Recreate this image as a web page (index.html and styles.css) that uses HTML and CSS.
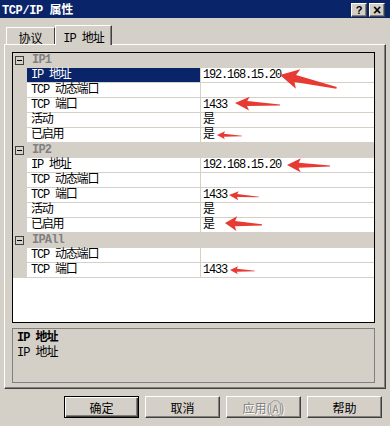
FILE: index.html
```html
<!DOCTYPE html>
<html lang="zh-CN">
<head>
  <meta charset="UTF-8">
  <title>TCP/IP 属性</title>
  <link rel="stylesheet" href="styles.css">
</head>
<body>
  <div class="window">
    <div class="titlebar">
      <span class="title">TCP/IP 属性</span>
      <div class="caption-btns">
        <span class="cap-btn">?</span>
        <span class="cap-btn close">×</span>
      </div>
    </div>

    <div class="tabs">
      <div class="tab">协议</div>
      <div class="tab active">IP 地址</div>
    </div>

    <div class="panel">
      <div class="grid">
        <div class="group"><span class="toggle"></span>IP1</div>
        <div class="row selected"><span class="name">IP 地址</span><span class="val">192.168.15.20</span></div>
        <div class="row"><span class="name">TCP 动态端口</span><span class="val"></span></div>
        <div class="row"><span class="name">TCP 端口</span><span class="val">1433</span></div>
        <div class="row"><span class="name">活动</span><span class="val">是</span></div>
        <div class="row"><span class="name">已启用</span><span class="val">是</span></div>

        <div class="group"><span class="toggle"></span>IP2</div>
        <div class="row"><span class="name">IP 地址</span><span class="val">192.168.15.20</span></div>
        <div class="row"><span class="name">TCP 动态端口</span><span class="val"></span></div>
        <div class="row"><span class="name">TCP 端口</span><span class="val">1433</span></div>
        <div class="row"><span class="name">活动</span><span class="val">是</span></div>
        <div class="row"><span class="name">已启用</span><span class="val">是</span></div>

        <div class="group"><span class="toggle"></span>IPAll</div>
        <div class="row"><span class="name">TCP 动态端口</span><span class="val"></span></div>
        <div class="row"><span class="name">TCP 端口</span><span class="val">1433</span></div>
      </div>

      <div class="desc">
        <div class="desc-title">IP 地址</div>
        <div>IP 地址</div>
      </div>
    </div>

    <div class="buttons">
      <button class="btn default">确定</button>
      <button class="btn">取消</button>
      <button class="btn disabled">应用(<u>A</u>)</button>
      <button class="btn">帮助</button>
    </div>

    <!-- red annotation arrows drawn on top of the screenshot -->
    <svg class="marks" width="390" height="426" viewBox="0 0 390 426">
      <defs>
        <polygon id="arrow" points="0,0 0.32,-1 0.27,-0.35 1,-0.08 1,0.08 0.27,0.35 0.32,1"/>
      </defs>
      <g fill="#e63a32">
        <use href="#arrow" transform="translate(280,75) rotate(12.8) scale(58,10)"/>
        <use href="#arrow" transform="translate(235,103) rotate(2.5) scale(45,7)"/>
        <use href="#arrow" transform="translate(217,135) rotate(2.3) scale(25,4)"/>
        <use href="#arrow" transform="translate(287,165) rotate(1.3) scale(43,7)"/>
        <use href="#arrow" transform="translate(229,195) rotate(3.8) scale(30,4.5)"/>
        <use href="#arrow" transform="translate(225,223) rotate(3) scale(37,7.5)"/>
        <use href="#arrow" transform="translate(230,270) rotate(2.3) scale(25,4)"/>
      </g>
    </svg>
  </div>
</body>
</html>
```

FILE: styles.css
```css
body {
  margin: 0;
  background: #d4d0c8;
  font-family: "Liberation Mono", "Noto Sans CJK SC", monospace;
  font-size: 12px;
  color: #000;
}

.window {
  position: relative;
  width: 390px;
  height: 426px;
  overflow: hidden;
}

/* title bar */
.titlebar {
  height: 18px;
  background: #0a246a;
  display: flex;
  align-items: center;
  justify-content: space-between;
  padding: 0 5px 0 2px;
}

.title {
  color: #fff;
  font-weight: bold;
  font-size: 12px;
  letter-spacing: -0.4px;
}

.caption-btns {
  display: flex;
  gap: 2px;
  margin-top: 2px;
}

.cap-btn {
  width: 16px;
  height: 14px;
  box-sizing: border-box;
  background: #d4d0c8;
  border: 1px solid;
  border-color: #fff #404040 #404040 #fff;
  box-shadow: inset -1px -1px #808080;
  font-family: "Liberation Sans", sans-serif;
  font-weight: bold;
  font-size: 11px;
  line-height: 12px;
  text-align: center;
}

.cap-btn.close {
  font-size: 14px;
}

/* tabs */
.tabs {
  display: flex;
  align-items: flex-end;
  padding-left: 6px;
  margin-top: 7px;
  height: 19px;
}

.tab {
  position: relative;
  box-sizing: border-box;
  height: 17px;
  width: 49px;
  padding-top: 1px;
  border: 1px solid;
  border-color: #fff #404040 transparent #fff;
  border-bottom: none;
  text-align: center;
  font-size: 12px;
}

.tab.active {
  height: 20px;
  width: 57px;
  margin-bottom: -1px;
  padding-top: 2px;
  background: #d4d0c8;
  z-index: 1;
  box-shadow: inset -1px 0 #808080;
  letter-spacing: -1px;
}

/* main page of the dialog */
.panel {
  margin-left: 4px;
  width: 382px;
  box-sizing: border-box;
  border: 1px solid;
  border-color: #fff #404040 #404040 #fff;
  box-shadow: inset -1px -1px #808080;
  padding: 7px 10px 5px 7px;
}

.grid {
  height: 271px;
  box-sizing: border-box;
  border: 1px solid #000;
  background: #fff;
  letter-spacing: -1.2px;
}

.group,
.row {
  display: flex;
  height: 14px;
  line-height: 14px;
  border-bottom: 1px solid #d4d0c8;
}

.group {
  align-items: center;
  background: #d4d0c8;
  color: #808080;
  font-weight: bold;
  letter-spacing: -0.8px;
}

.toggle {
  position: relative;
  width: 9px;
  height: 9px;
  box-sizing: border-box;
  margin: 0 8px 0 2px;
  border: 1px solid #404040;
}

.toggle::after {
  content: "";
  position: absolute;
  left: 1px;
  top: 3px;
  width: 5px;
  height: 1px;
  background: #000;
}

.row {
  border-left: 14px solid #d4d0c8;
}

.name {
  width: 174px;
  box-sizing: border-box;
  padding-left: 4px;
  border-right: 1px solid #d4d0c8;
  white-space: nowrap;
}

.val {
  padding-left: 2px;
}

.row.selected .name {
  background: #0a246a;
  color: #fff;
}

/* description box */
.desc {
  margin-top: 5px;
  height: 55px;
  box-sizing: border-box;
  border: 1px solid #808080;
  padding: 2px 4px;
  line-height: 15px;
  letter-spacing: -1px;
}

.desc-title {
  font-weight: bold;
}

/* dialog buttons */
.buttons {
  display: flex;
  justify-content: flex-end;
  gap: 6px;
  padding-right: 8px;
  margin-top: 7px;
}

.btn {
  width: 75px;
  height: 22px;
  background: #d4d0c8;
  border: 1px solid;
  border-color: #fff #404040 #404040 #fff;
  box-shadow: inset -1px -1px #808080;
  font-family: "Noto Sans CJK SC", sans-serif;
  font-size: 12px;
  padding: 0;
  color: #000;
}

.btn.default {
  border: 1px solid #000;
  box-shadow: inset 1px 1px #fff, inset -1px -1px #404040, inset -2px -2px #808080;
}

.btn.disabled {
  color: #808080;
  text-shadow: 1px 1px #fff;
}

.btn u {
  text-decoration: none;
  border: 1px solid #a0a0a0;
  border-radius: 6px;
  padding: 0 1px;
  font-size: 10px;
}

/* overlay for the hand-drawn arrows */
.marks {
  position: absolute;
  left: 0;
  top: 0;
  pointer-events: none;
}
```
